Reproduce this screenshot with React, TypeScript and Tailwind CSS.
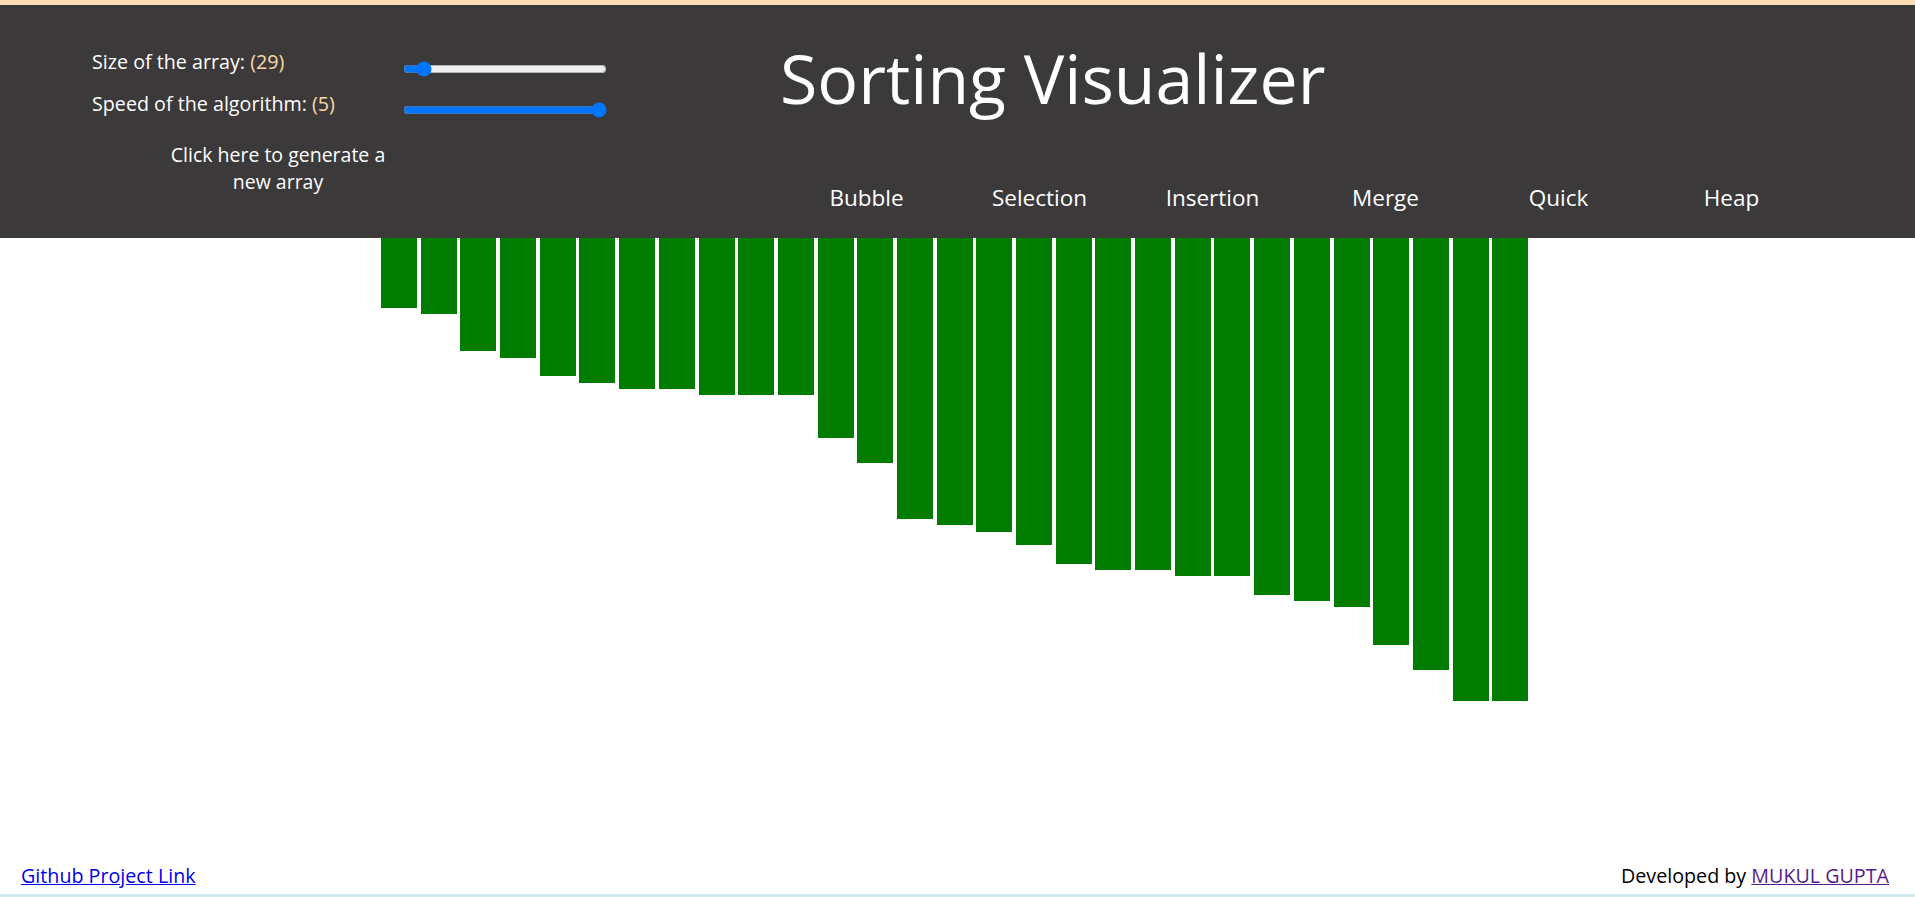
import React from "react";

const bars = [70, 76, 113, 120, 138, 145, 151, 151, 157, 157, 157, 200, 225, 281, 287, 294, 307, 326, 332, 332, 338, 338, 357, 363, 369, 407, 432, 463, 463];
const algos = ["Bubble", "Selection", "Insertion", "Merge", "Quick", "Heap"];

export default function App() {
  return (
    <div className="flex h-[897px] w-full flex-col overflow-hidden bg-white font-['Open_Sans',sans-serif]">
      <div className="h-[5px] bg-[#fddcb5]" />
      <header className="flex h-[233px] shrink-0 bg-[#3b393a] text-white">
        <div className="w-[780px] shrink-0 pl-[92px] pt-[42px]">
          <div className="flex h-[30px] items-center">
            <span className="w-[311px] text-[19.7px] font-medium">
              Size of the array: <span className="text-[#fcd8a8]">(29)</span>
            </span>
            <input
              type="range"
              min={20}
              max={150}
              defaultValue={29}
              className="mt-[14px] w-[204px] accent-[#0075ff]"
            />
          </div>
          <div className="mt-[12px] flex h-[30px] items-center">
            <span className="w-[311px] text-[19.7px] font-medium">
              Speed of the algorithm: <span className="text-[#fcd8a8]">(5)</span>
            </span>
            <input
              type="range"
              min={1}
              max={5}
              defaultValue={5}
              className="mt-[12px] w-[204px] accent-[#0075ff]"
            />
          </div>
          <button className="ml-[70px] mt-[22px] w-[232px] text-center text-[19.5px] font-medium leading-[27px] text-white">
            Click here to generate a new array
          </button>
        </div>
        <div className="flex flex-1 flex-col">
          <h1 className="mt-[39px] text-[68px] leading-none font-normal">Sorting Visualizer</h1>
          <div className="mb-[20px] mt-auto grid w-[1038px] grid-cols-6">
            {algos.map((a) => (
              <button key={a} className="h-[40px] text-center text-[22.5px] font-medium text-white">
                {a}
              </button>
            ))}
          </div>
        </div>
      </header>
      <main className="flex flex-1 items-start gap-[3.7px] pl-[381px]">
        {bars.map((h, i) => (
          <div key={i} className="w-[36px] shrink-0 bg-[#037c02]" style={{ height: h }} />
        ))}
      </main>
      <footer className="flex items-center justify-between pb-[3px] pl-[21px] pr-[26px] text-[19.7px]">
        <a href="#" className="text-[#0000ee] underline">
          Github Project Link
        </a>
        <span className="text-black">
          Developed by{" "}
          <a href="#" className="text-[#551a8b] underline">
            MUKUL GUPTA
          </a>
        </span>
      </footer>
      <div className="h-[3px] bg-[#d4ecec]" />
    </div>
  );
}
